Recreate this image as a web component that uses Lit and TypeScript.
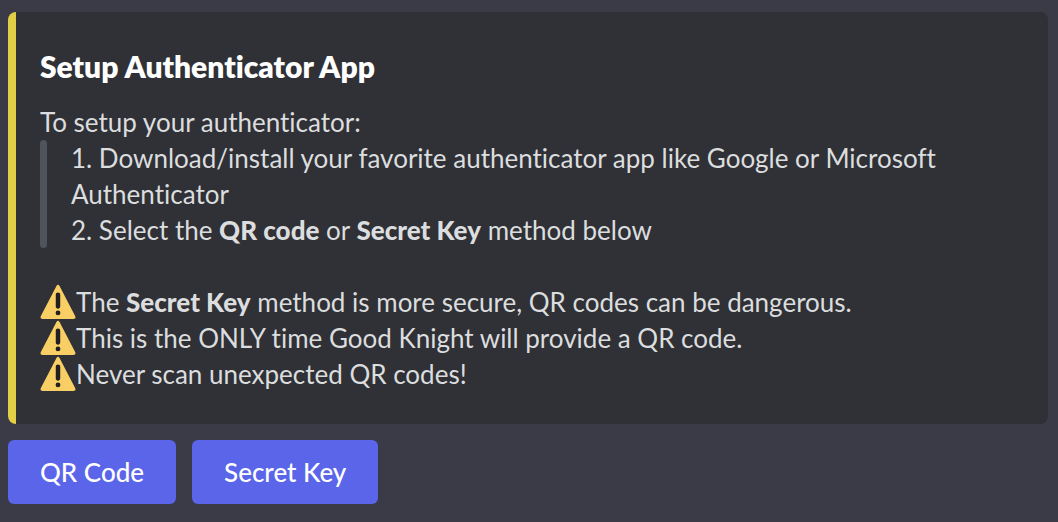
import { LitElement, html, css } from "lit";
import { customElement } from "lit/decorators.js";

@customElement("warning-icon")
class WarningIcon extends LitElement {
  static styles = css`
    :host { display: block; flex: none; width: 36px; height: 36px; }
    svg { display: block; width: 100%; height: 100%; }
  `;
  render() {
    return html`<svg viewBox="0 0 36 36" role="img" aria-label="Warning">
      <path fill="#f8cf65" d="M2.653 35C.811 35-.001 33.662.847 32.027L16.456 1.972c.849-1.635 2.238-1.635 3.087 0l15.609 30.056c.85 1.634.037 2.972-1.805 2.972H2.653z"/>
      <path fill="#231F20" d="M15.583 28.953a2.421 2.421 0 0 1 2.419-2.418 2.421 2.421 0 0 1 2.419 2.418 2.422 2.422 0 0 1-2.419 2.419 2.421 2.421 0 0 1-2.419-2.419zm.186-18.293c0-1.302.961-2.108 2.232-2.108 1.241 0 2.233.837 2.233 2.108v11.938c0 1.271-.992 2.108-2.233 2.108-1.271 0-2.232-.807-2.232-2.108V10.66z"/>
    </svg>`;
  }
}

@customElement("app-root")
class AppRoot extends LitElement {
  static styles = css`
    :host {
      display: block;
      box-sizing: border-box;
      min-height: 100vh;
      padding: 12px 10px 16px 8px;
      background: #3a3b47;
      color: #dcddde;
      font: 26px/36px Lato, "Open Sans", sans-serif;
      font-variant-ligatures: none;
    }
    .embed {
      padding: 32px 32px 32px 24px;
      border-left: 8px solid #e2cf46;
      border-radius: 8px;
      background: #2f3136;
    }
    h1 { margin: 0 0 16px; color: #fff; font-size: 30px; line-height: 44px; font-weight: 800; }
    p { margin: 0; }
    strong { font-weight: 900; }
    blockquote { display: flex; gap: 24px; margin: 0 0 36px; }
    blockquote::before { content: ""; flex: none; width: 7px; border-radius: 4px; background: #4f545c; }
    .warning { display: flex; }
    .actions { display: flex; gap: 16px; margin-top: 16px; }
    button {
      height: 64px;
      padding: 0 32px;
      border: 0;
      border-radius: 6px;
      background: #5a65ea;
      color: #fff;
      font: 500 26px/36px Lato, "Open Sans", sans-serif;
    }
  `;
  render() {
    return html`
      <article class="embed">
        <h1>Setup Authenticator App</h1>
        <p>To setup your authenticator:</p>
        <blockquote>
          <div>
            <p>1. Download/install your favorite authenticator app like Google or Microsoft Authenticator</p>
            <p>2. Select the <strong>QR code</strong> or <strong>Secret Key</strong> method below</p>
          </div>
        </blockquote>
        <div class="warning"><warning-icon></warning-icon><p>The <strong>Secret Key</strong> method is more secure, QR codes can be dangerous.</p></div>
        <div class="warning"><warning-icon></warning-icon><p>This is the ONLY time Good Knight will provide a QR code.</p></div>
        <div class="warning"><warning-icon></warning-icon><p>Never scan unexpected QR codes!</p></div>
      </article>
      <div class="actions">
        <button type="button">QR Code</button>
        <button type="button">Secret Key</button>
      </div>
    `;
  }
}
